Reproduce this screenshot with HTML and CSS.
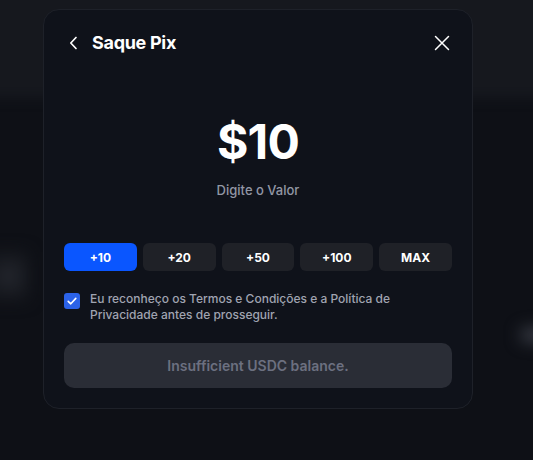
FILE: index.html
```html
<!DOCTYPE html>
<html lang="pt">
<head>
<meta charset="utf-8">
<title>Saque Pix</title>
<link rel="stylesheet" href="styles.css">
</head>
<body>
<div class="backdrop">
  <div class="bg-top"></div>
  <div class="bg-blob bg-left"></div>
  <div class="bg-blob bg-right"></div>
</div>
<div class="stage">
  <section class="modal">
    <header class="modal-head">
      <div class="head-left">
        <button class="icon-btn back" aria-label="Voltar">
          <svg width="16" height="16" viewBox="0 0 16 16" fill="none"><path d="M10 2.5 L4.8 8 L10 13.5" stroke="#fff" stroke-width="1.7" stroke-linecap="round" stroke-linejoin="round"/></svg>
        </button>
        <h1 class="title">Saque Pix</h1>
      </div>
      <button class="icon-btn close" aria-label="Fechar">
        <svg width="16" height="16" viewBox="0 0 16 16" fill="none"><path d="M1.5 1.5 L14.5 14.5 M14.5 1.5 L1.5 14.5" stroke="#fff" stroke-width="1.5" stroke-linecap="round"/></svg>
      </button>
    </header>

    <div class="amount-block">
      <div class="amount">$10</div>
      <div class="amount-label">Digite o Valor</div>
    </div>

    <div class="presets">
      <button class="preset active">+10</button>
      <button class="preset">+20</button>
      <button class="preset">+50</button>
      <button class="preset">+100</button>
      <button class="preset">MAX</button>
    </div>

    <label class="terms">
      <span class="checkbox">
        <svg width="12" height="12" viewBox="0 0 12 12" fill="none"><path d="M2.2 6.3 L4.8 8.8 L9.8 3.4" stroke="#fff" stroke-width="1.6" stroke-linecap="round" stroke-linejoin="round"/></svg>
      </span>
      <span class="terms-text">Eu reconheço os Termos e Condições e a Política de Privacidade antes de prosseguir.</span>
    </label>

    <button class="submit" disabled>Insufficient USDC balance.</button>
  </section>
</div>
</body>
</html>
```

FILE: styles.css
```css
* { box-sizing: border-box; }
html, body { margin: 0; padding: 0; }
body {
  width: 533px;
  height: 460px;
  overflow: hidden;
  background: #0e1016;
  font-family: Inter, "Noto Sans", sans-serif;
  color: #fff;
  position: relative;
}
.backdrop {
  position: absolute;
  inset: 0;
  overflow: hidden;
  z-index: 0;
}
.bg-top {
  position: absolute;
  left: -20px;
  right: -20px;
  top: -20px;
  height: 118px;
  background: #16181e;
  filter: blur(6px);
}
.bg-blob {
  position: absolute;
  filter: blur(8px);
}
.bg-left {
  left: -20px;
  top: 252px;
  width: 48px;
  height: 48px;
  background: radial-gradient(circle at 62% 50%, #262931 0%, #191b21 45%, #121419 100%);
}
.bg-right {
  left: 520px;
  top: 328px;
  width: 36px;
  height: 14px;
  background: #3a3d46;
  border-radius: 7px;
}
.stage {
  position: relative;
  z-index: 1;
  padding: 9px 0 0 43px;
}
.modal {
  width: 430px;
  height: 400px;
  background: #0f121a;
  border: 1px solid #1e2129;
  border-radius: 16px;
  padding: 20px;
  display: flex;
  flex-direction: column;
}
.modal-head {
  height: 26px;
  display: flex;
  align-items: center;
  justify-content: space-between;
}
.head-left {
  display: flex;
  align-items: center;
  gap: 8px;
}
.icon-btn {
  background: none;
  border: 0;
  padding: 0;
  width: 20px;
  height: 20px;
  display: flex;
  align-items: center;
  justify-content: center;
  cursor: pointer;
}
.title {
  margin: 0;
  font-size: 18px;
  font-weight: 700;
  letter-spacing: -0.3px;
  line-height: 26px;
}
.amount-block {
  margin-top: 62px;
  display: flex;
  flex-direction: column;
  align-items: center;
}
.amount {
  font-size: 48px;
  font-weight: 700;
  line-height: 48px;
  letter-spacing: -0.8px;
}
.amount-label {
  margin-top: 14px;
  font-size: 13px;
  line-height: 20px;
  color: #9297a5;
  font-weight: 500;
}
.presets {
  margin-top: 43px;
  display: grid;
  grid-template-columns: repeat(5, 1fr);
  gap: 6px;
}
.preset {
  height: 28px;
  border: 0;
  border-radius: 6px;
  background: #1f2127;
  color: #fff;
  font-family: inherit;
  font-size: 12px;
  font-weight: 700;
  padding: 0;
}
.preset.active { background: #0a56ff; }
.terms {
  margin-top: 20px;
  display: flex;
  align-items: flex-start;
  gap: 10px;
}
.checkbox {
  flex: none;
  margin-top: 2px;
  width: 16px;
  height: 16px;
  border-radius: 3px;
  background: #2b62e8;
  display: flex;
  align-items: center;
  justify-content: center;
}
.terms-text {
  font-size: 12px;
  line-height: 16px;
  color: #a0a4b1;
  font-weight: 500;
}
.submit {
  margin-top: 20px;
  height: 45px;
  width: 100%;
  border: 0;
  border-radius: 10px;
  background: #2a2d36;
  color: #6c7080;
  font-family: inherit;
  font-size: 14px;
  font-weight: 600;
}
```
